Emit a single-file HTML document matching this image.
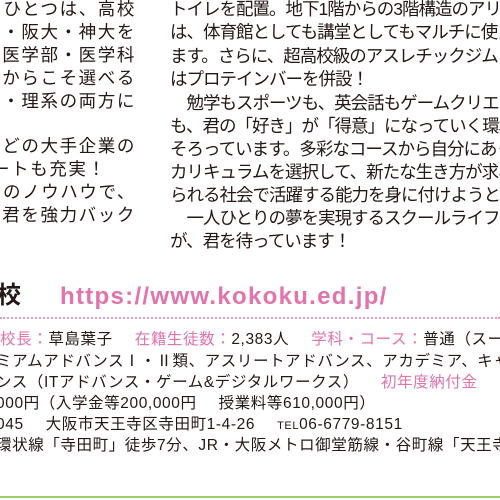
<!DOCTYPE html>
<html><head><meta charset="utf-8"><style>
html,body{margin:0;padding:0;background:#fff;width:500px;height:500px;overflow:hidden;position:relative}
.t{position:absolute;white-space:nowrap;font-family:"Liberation Sans","Noto Sans CJK JP",sans-serif;color:#231815;line-height:1}
.l{font-size:17.5px;right:364px;letter-spacing:1.6px}
.r{font-size:17.5px;left:170px;letter-spacing:-1px}
.i{font-size:15.5px;left:0;letter-spacing:0.6px}
.p{color:#e273ad}
.g{display:inline-block;width:22px}
</style></head><body>
<div class="t l" style="top:1px">ひとつは、高校</div>
<div class="t l" style="top:24px">大・阪大・神大を</div>
<div class="t l" style="top:47px">や医学部・医学科</div>
<div class="t l" style="top:70px">いからこそ選べる</div>
<div class="t l" style="top:93px">系・理系の両方に</div>
<div class="t l" style="top:138px">などの大手企業の</div>
<div class="t" style="top:161px;left:-8px;font-size:17.5px;letter-spacing:1.6px">ートも充実！</div>
<div class="t l" style="top:184px">めのノウハウで、</div>
<div class="t l" style="top:207px">す君を強力バック</div>

<div class="t r" style="top:1px">トイレを配置。地下1階からの3階構造のアリーナ</div>
<div class="t r" style="top:24px">は、体育館としても講堂としてもマルチに使え</div>
<div class="t r" style="top:48px">ます。さらに、超高校級のアスレチックジム</div>
<div class="t r" style="top:71px">はプロテインバーを併設！</div>
<div class="t r" style="top:95px">　勉学もスポーツも、英会話もゲームクリエイト</div>
<div class="t r" style="top:118px">も、君の「好き」が「得意」になっていく環境</div>
<div class="t r" style="top:141px">そろっています。多彩なコースから自分にあった</div>
<div class="t r" style="top:164px">カリキュラムを選択して、新たな生き方が求め</div>
<div class="t r" style="top:187px">られる社会で活躍する能力を身に付けようと</div>
<div class="t r" style="top:210px">　一人ひとりの夢を実現するスクールライフ</div>
<div class="t r" style="top:233px">が、君を待っています！</div>

<div class="t" style="top:284px;left:-3px;font-size:24px;font-weight:bold">校</div>
<div class="t p" style="top:285px;left:60px;font-size:24px;font-weight:bold;letter-spacing:1.3px">https://www.kokoku.ed.jp/</div>
<div style="position:absolute;left:0;top:317px;width:500px;border-top:2px dotted #e99bc5"></div>

<div class="t i" style="top:332px"><span class="p">校長：</span>草島葉子<span class="g"></span><span class="p">在籍生徒数：</span>2,383人<span class="g"></span><span class="p">学科・コース：</span>普通（スーパー</div>
<div class="t i" style="top:354px;left:-4px">ミアムアドバンスⅠ・Ⅱ類、アスリートアドバンス、アカデミア、キャリア</div>
<div class="t i" style="top:375px;left:-4px">ンス（ITアドバンス・ゲーム&amp;デジタルワークス）<span class="g"></span><span class="p">初年度納付金</span></div>
<div class="t i" style="top:396px;left:-4px">000円（入学金等200,000円<span class="g"></span>授業料等610,000円）</div>
<div class="t i" style="top:417px;left:-4px">045<span class="g"></span>大阪市天王寺区寺田町1-4-26<span class="g"></span><span style="font-size:11px">TEL</span>06-6779-8151</div>
<div class="t i" style="top:438px;left:-4px">環状線「寺田町」徒歩7分、JR・大阪メトロ御堂筋線・谷町線「天王寺」</div>
<div style="position:absolute;left:0;top:496px;width:500px;height:2px;background:#9ccf6a"></div>
</body></html>
